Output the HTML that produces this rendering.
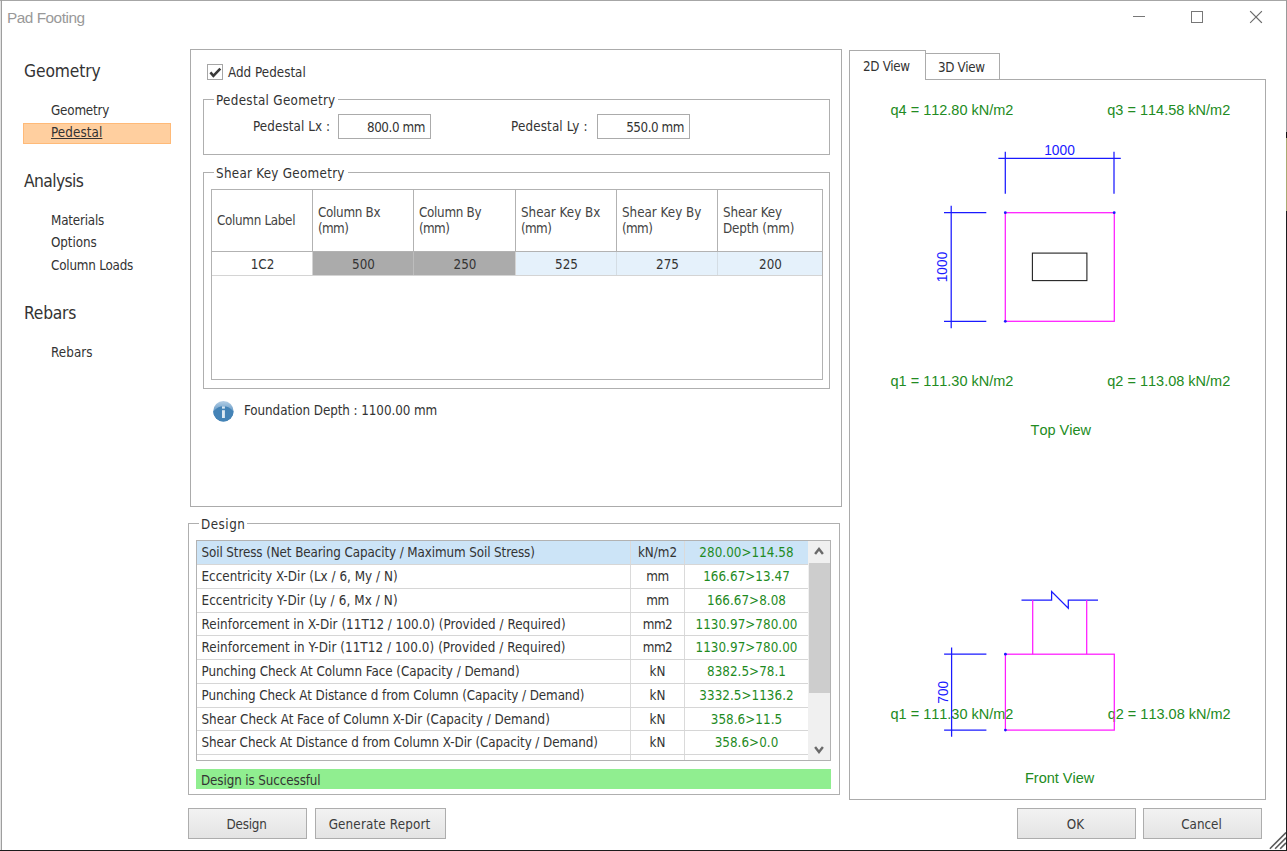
<!DOCTYPE html>
<html>
<head>
<meta charset="utf-8">
<title>Pad Footing</title>
<style>
*{box-sizing:border-box;margin:0;padding:0}
html,body{width:1287px;height:851px;overflow:hidden;background:#fff}
body{font-family:"DejaVu Sans Condensed","Liberation Sans",sans-serif;font-size:13.3px;color:#333;position:relative}
.abs{position:absolute}
.t{position:absolute;white-space:pre;line-height:16px;height:16px}
#win{position:absolute;left:0;top:0;width:1287px;height:851px;background:#fff}
.title{left:7px;top:8px;font-family:"Liberation Sans",sans-serif;font-size:15.4px;letter-spacing:-.5px;color:#999;line-height:20px;height:20px}
.h{font-size:17.3px;line-height:22px;height:22px;color:#333}
.panel{position:absolute;border:1px solid #ababab;background:#fff}
.gb{position:absolute;border:1px solid #afafaf}
.lg{position:absolute;background:#fff;white-space:pre;line-height:16px;height:16px;padding:0 2px 0 2px;margin-top:1px}
.inp{position:absolute;border:1px solid #ababab;background:#fff;text-align:right;line-height:25px;white-space:pre}
.btn{position:absolute;border:1px solid #adadad;background:linear-gradient(#f2f2f2,#e4e4e4);text-align:center;line-height:31px;height:31px;white-space:pre;color:#3c3c3c}
.g{color:#1f8b1f}
.mm{letter-spacing:-.6px}

.th{position:absolute;top:190px;height:61px;padding-top:1px;border-right:1px solid #b2b2b2;color:#444;padding-left:5px;display:flex;align-items:center;line-height:16px;white-space:pre}
.td{position:absolute;top:252px;height:23px;text-align:center;line-height:25px;color:#333;padding-left:1px}
.row{position:absolute;left:197px;width:611px;border-bottom:1px solid #d6d6d6;white-space:pre;line-height:24px}
.row.sel{background:#cce4f7}
.row span{position:absolute;top:0;bottom:0;display:block}
.c1{left:0;width:434px;padding-left:4.5px;border-right:1px solid #dadada}
.c2{left:434px;width:54px;text-align:center;border-right:1px solid #dadada}
.c3{left:488px;width:123px;text-align:center;letter-spacing:.05px}
svg text{font-family:"Liberation Sans",sans-serif;font-kerning:none}
.mmu{letter-spacing:-.5px}
</style>
</head>
<body>
<div id="win">
<div class="abs" style="left:0;top:0;width:1287px;height:1px;background:#a6a6a6"></div>
<div class="abs" style="left:0;top:1px;width:1px;height:849px;background:#e2e2e2"></div>
<div class="abs" style="left:1px;top:0;width:1px;height:850px;background:#9e9e9e"></div>
<div class="abs" style="left:1286px;top:0;width:1px;height:132px;background:#9a9a9a"></div>
<div class="abs" style="left:1286px;top:132px;width:1px;height:6px;background:#111"></div>
<div class="abs" style="left:1286px;top:138px;width:1px;height:73px;background:#a9a974"></div>
<div class="abs" style="left:1286px;top:211px;width:1px;height:640px;background:#1c1c1c"></div>
<div class="abs" style="left:0;top:850px;width:1287px;height:1px;background:#1c1c1c"></div>
</div>
<!-- title bar -->
<div class="t title">Pad Footing</div>
<svg class="abs" style="left:1120px;top:0" width="160" height="34" viewBox="0 0 160 34">
  <path d="M13 16.5h12" stroke="#777" stroke-width="1" fill="none"/>
  <rect x="71.5" y="11.5" width="11" height="11" stroke="#777" stroke-width="1" fill="none"/>
  <path d="M130.5 11.5L141.5 22.5M141.5 11.5L130.5 22.5" stroke="#6c6c6c" stroke-width="1.1" stroke-linecap="square" fill="none"/>
</svg>

<!-- left nav -->
<div class="t h" style="left:24px;top:60px;letter-spacing:-0.12px">Geometry</div>
<div class="t" style="left:51px;top:103px;letter-spacing:-0.19px">Geometry</div>
<div class="abs" style="left:23px;top:123px;width:148px;height:21px;background:#ffcf9f;border:1px solid #ffba78"></div>
<div class="t" style="left:51px;top:125px;text-decoration:underline;letter-spacing:0.09px">Pedestal</div>
<div class="t h" style="left:24px;top:170px;letter-spacing:-0.59px">Analysis</div>
<div class="t" style="left:51px;top:213px;letter-spacing:-0.19px">Materials</div>
<div class="t" style="left:51px;top:235px;letter-spacing:-0.07px">Options</div>
<div class="t" style="left:51px;top:258px;letter-spacing:-0.2px">Column Loads</div>
<div class="t h" style="left:24px;top:302px;letter-spacing:-0.23px">Rebars</div>
<div class="t" style="left:51px;top:345px;letter-spacing:0.07px">Rebars</div>

<!-- main panel -->
<div class="panel" style="left:190px;top:49px;width:652px;height:458px"></div>

<!-- checkbox -->
<div class="abs" style="left:207px;top:64px;width:16px;height:16px;border:1px solid #a6a6a6;background:#fff"></div>
<svg class="abs" style="left:207px;top:64px" width="16" height="16" viewBox="0 0 16 16"><path d="M3.4 8.3L6.4 11.8L13.3 4.6" stroke="#3a3a3a" stroke-width="2.6" fill="none"/></svg>
<div class="t" style="left:228px;top:65px;letter-spacing:0.02px">Add Pedestal</div>

<!-- Pedestal Geometry group -->
<div class="gb" style="left:203px;top:99px;width:627px;height:56px"></div>
<div class="lg" style="left:214px;top:92px;letter-spacing:.32px">Pedestal Geometry</div>
<div class="t" style="left:253px;top:119px;letter-spacing:0.09px">Pedestal Lx :</div>
<div class="inp" style="left:338px;top:114px;width:93px;height:25px;padding-right:5px;letter-spacing:-0.41px">800.0 mm</div>
<div class="t" style="left:511px;top:119px;letter-spacing:0.15px">Pedestal Ly :</div>
<div class="inp" style="left:597px;top:114px;width:93px;height:25px;padding-right:5px;letter-spacing:-0.44px">550.0 mm</div>

<!-- Shear Key Geometry group -->
<div class="gb" style="left:203px;top:172px;width:627px;height:217px"></div>
<div class="lg" style="left:214px;top:165px;letter-spacing:.28px;padding-right:3px">Shear Key Geometry</div>
<div class="abs" style="left:211px;top:189px;width:612px;height:191px;border:1px solid #b2b2b2;background:#fff"></div>
<div class="abs" style="left:212px;top:251px;width:610px;height:1px;background:#b2b2b2"></div>
<div class="abs" style="left:212px;top:275px;width:610px;height:1px;background:#d4d4d4"></div>
<div class="th" style="left:212px;width:101px;letter-spacing:-0.31px">Column Label</div>
<div class="th" style="left:313px;width:101px;letter-spacing:-0.3px"><div>Column Bx
<span class="mm">(mm)</span></div></div>
<div class="th" style="left:414px;width:102px;letter-spacing:-0.3px"><div>Column By
<span class="mm">(mm)</span></div></div>
<div class="th" style="left:516px;width:101px"><div>Shear Key Bx
<span class="mm">(mm)</span></div></div>
<div class="th" style="left:617px;width:101px"><div>Shear Key By
<span class="mm">(mm)</span></div></div>
<div class="th" style="left:718px;width:104px;border-right:0;letter-spacing:-0.15px">Shear Key
Depth (mm)</div>
<div class="td" style="left:212px;width:100px">1C2</div>
<div class="td" style="left:313px;width:100px;background:#ababab">500</div>
<div class="td" style="left:414px;width:101px;background:#ababab">250</div>
<div class="td" style="left:516px;width:100px;background:#e5f1fb">525</div>
<div class="td" style="left:617px;width:100px;background:#e5f1fb">275</div>
<div class="td" style="left:718px;width:104px;background:#e5f1fb">200</div>
<div class="abs" style="left:312px;top:252px;width:1px;height:23px;background:#d4d4d4"></div>
<div class="abs" style="left:413px;top:252px;width:1px;height:23px;background:#bdbdbd"></div>
<div class="abs" style="left:515px;top:252px;width:1px;height:23px;background:#d4d4d4"></div>
<div class="abs" style="left:616px;top:252px;width:1px;height:23px;background:#d4dde4"></div>
<div class="abs" style="left:717px;top:252px;width:1px;height:23px;background:#d4dde4"></div>

<!-- info -->
<svg class="abs" style="left:212px;top:400px" width="23" height="23" viewBox="0 0 23 23">
  <defs><clipPath id="ic"><circle cx="11.4" cy="11.3" r="10.2"/></clipPath>
  <linearGradient id="ig" x1="0" y1="0" x2="0" y2="1"><stop offset="0" stop-color="#b4cee5"/><stop offset=".45" stop-color="#6d9fc9"/><stop offset="1" stop-color="#4483b6"/></linearGradient></defs>
  <circle cx="11.4" cy="11.3" r="10.2" fill="url(#ig)"/>
  <ellipse cx="11.4" cy="21.2" rx="13" ry="15" fill="#4483b6" clip-path="url(#ic)"/>
  <rect x="10" y="6.4" width="2.9" height="2.2" fill="#dde9f3"/>
  <rect x="10" y="10.2" width="2.9" height="7.8" fill="#dde9f3"/>
</svg>
<div class="t" style="left:244px;top:403px;letter-spacing:-0.07px">Foundation Depth : 1100.00 mm</div>

<!-- Design group -->
<div class="gb" style="left:188px;top:523px;width:652px;height:272px"></div>
<div class="lg" style="left:199px;top:516px;letter-spacing:0.51px">Design</div>
<div class="abs" style="left:196px;top:540px;width:635px;height:221px;border:1px solid #b2b2b2;background:#fff"></div>
<div class="row sel" style="top:541px;height:24px"><span class="c1" style="letter-spacing:-0.1px">Soil Stress (Net Bearing Capacity / Maximum Soil Stress)</span><span class="c2">kN/m2</span><span class="c3 g">280.00&gt;114.58</span></div>
<div class="row" style="top:565px;height:24px"><span class="c1" style="letter-spacing:0.03px">Eccentricity X-Dir (Lx / 6, My / N)</span><span class="c2 mmu">mm</span><span class="c3 g">166.67&gt;13.47</span></div>
<div class="row" style="top:589px;height:24px"><span class="c1" style="letter-spacing:0.12px">Eccentricity Y-Dir (Ly / 6, Mx / N)</span><span class="c2 mmu">mm</span><span class="c3 g">166.67&gt;8.08</span></div>
<div class="row" style="top:613px;height:23px"><span class="c1" style="letter-spacing:0.04px">Reinforcement in X-Dir (11T12 / 100.0) (Provided / Required)</span><span class="c2 mmu">mm2</span><span class="c3 g">1130.97&gt;780.00</span></div>
<div class="row" style="top:636px;height:24px"><span class="c1" style="letter-spacing:0.07px">Reinforcement in Y-Dir (11T12 / 100.0) (Provided / Required)</span><span class="c2 mmu">mm2</span><span class="c3 g">1130.97&gt;780.00</span></div>
<div class="row" style="top:660px;height:24px"><span class="c1" style="letter-spacing:-0.04px">Punching Check At Column Face (Capacity / Demand)</span><span class="c2">kN</span><span class="c3 g">8382.5&gt;78.1</span></div>
<div class="row" style="top:684px;height:24px"><span class="c1" style="letter-spacing:-0.09px">Punching Check At Distance d from Column (Capacity / Demand)</span><span class="c2">kN</span><span class="c3 g">3332.5&gt;1136.2</span></div>
<div class="row" style="top:708px;height:23px"><span class="c1" style="letter-spacing:0.0px">Shear Check At Face of Column X-Dir (Capacity / Demand)</span><span class="c2">kN</span><span class="c3 g">358.6&gt;11.5</span></div>
<div class="row" style="top:731px;height:24px"><span class="c1" style="letter-spacing:-0.08px">Shear Check At Distance d from Column X-Dir (Capacity / Demand)</span><span class="c2">kN</span><span class="c3 g">358.6&gt;0.0</span></div>
<div class="row" style="top:755px;height:5px;border-bottom:0"><span class="c1"></span><span class="c2"></span><span class="c3"></span></div>
<!-- scrollbar -->
<div class="abs" style="left:808px;top:541px;width:22px;height:219px;background:#f0f0f0"></div>
<div class="abs" style="left:809px;top:563px;width:21px;height:130px;background:#cdcdcd"></div>
<svg class="abs" style="left:808px;top:541px" width="22" height="219" viewBox="0 0 22 219">
  <path d="M7.1 13L11 8L14.9 13" stroke="#6a6a6a" stroke-width="2.4" fill="none"/>
  <path d="M7.1 206L11 211L14.9 206" stroke="#6a6a6a" stroke-width="2.4" fill="none"/>
</svg>
<!-- status -->
<div class="abs" style="left:196px;top:769px;width:635px;height:20px;background:#90ee90"></div>
<div class="t" style="left:201px;top:773px;letter-spacing:-0.11px">Design is Successful</div>

<!-- buttons -->
<div class="btn" style="left:188px;top:808px;width:119px;padding-right:2px;letter-spacing:-0.22px">Design</div>
<div class="btn" style="left:315px;top:808px;width:131px;padding-right:2px;letter-spacing:0.16px">Generate Report</div>
<div class="btn" style="left:1017px;top:808px;width:119px;padding-right:2px">OK</div>
<div class="btn" style="left:1143px;top:808px;width:119px;padding-right:2px">Cancel</div>

<!-- right tab panel -->
<div class="panel" style="left:849px;top:79px;width:417px;height:721px"></div>
<div class="abs" style="left:925px;top:53px;width:75px;height:27px;border:1px solid #ababab;border-left:0;background:#fff"></div>
<div class="abs" style="left:849px;top:50px;width:77px;height:30px;border:1px solid #ababab;border-bottom:0;background:#fff"></div>
<div class="t" style="left:863px;top:59px;letter-spacing:-0.33px">2D View</div>
<div class="t" style="left:938px;top:60px;letter-spacing:-0.34px">3D View</div>

<svg class="abs" style="left:849px;top:79px" width="416" height="720" viewBox="849 79 416 720">
  <g font-size="14.5" fill="#228b22">
    <text x="890.5" y="114.6">q4 = 112.80 kN/m2</text>
    <text x="1107.3" y="114.6">q3 = 114.58 kN/m2</text>
    <text x="890.5" y="385.5">q1 = 111.30 kN/m2</text>
    <text x="1107.3" y="385.5">q2 = 113.08 kN/m2</text>
    <text x="1030.6" y="435">Top View</text>
    <text x="890.5" y="718.9">q1 = 111.30 kN/m2</text>
    <text x="1107.7" y="718.9">q2 = 113.08 kN/m2</text>
    <text x="1025" y="783.3">Front View</text>
  </g>
  <g stroke="#1a1aff" stroke-width="1.25" fill="none">
    <path d="M998.4 158.4H1120.8M1005.3 151.7V193.7M1114 151.7V193.7"/>
    <path d="M951.2 205.8V328.2M944 212.7H986.3M944 321.3H986.3"/>
    <path d="M951.6 647.6V736.8M944.1 654.2H986.4M944.1 730.1H986.4"/>
    <path d="M1021.5 600H1051.6V591.6L1068.3 608.2V600H1098"/>
  </g>
  <g font-size="13.75" fill="#1a1aff">
    <text x="1044.2" y="155.2">1000</text>
    <text transform="translate(947.4 282.3) rotate(-90)">1000</text>
    <text transform="translate(947.7 703.7) rotate(-90)">700</text>
  </g>
  <g stroke="#ff1aff" stroke-width="1.25" fill="none">
    <rect x="1005.3" y="212.7" width="109" height="108.6"/>
    <rect x="1005.4" y="654.2" width="108.9" height="75.9"/>
    <path d="M1032.7 654.2V600M1086.7 654.2V600"/>
  </g>
  <rect x="1032.4" y="253.1" width="54.5" height="27.5" stroke="#222" stroke-width="1.1" fill="none"/>
  <g fill="#1a1aff">
    <circle cx="1005.3" cy="212.7" r="1.4"/><circle cx="1114.2" cy="212.7" r="1.4"/><circle cx="1005.3" cy="321.3" r="1.4"/>
    <circle cx="1005.4" cy="654.2" r="1.4"/><circle cx="1005.4" cy="730.1" r="1.4"/>
  </g>
</svg>

<!-- resize grip -->
<svg class="abs" style="left:1266px;top:830px" width="20" height="20" viewBox="0 0 20 20">
  <path d="M3.9 18.7L20 2.6M9.1 18.7L20 7.8M14.2 18.7L20 12.9" stroke="#5a5a5a" stroke-width="1.6" fill="none"/>
</svg>

</body>
</html>
